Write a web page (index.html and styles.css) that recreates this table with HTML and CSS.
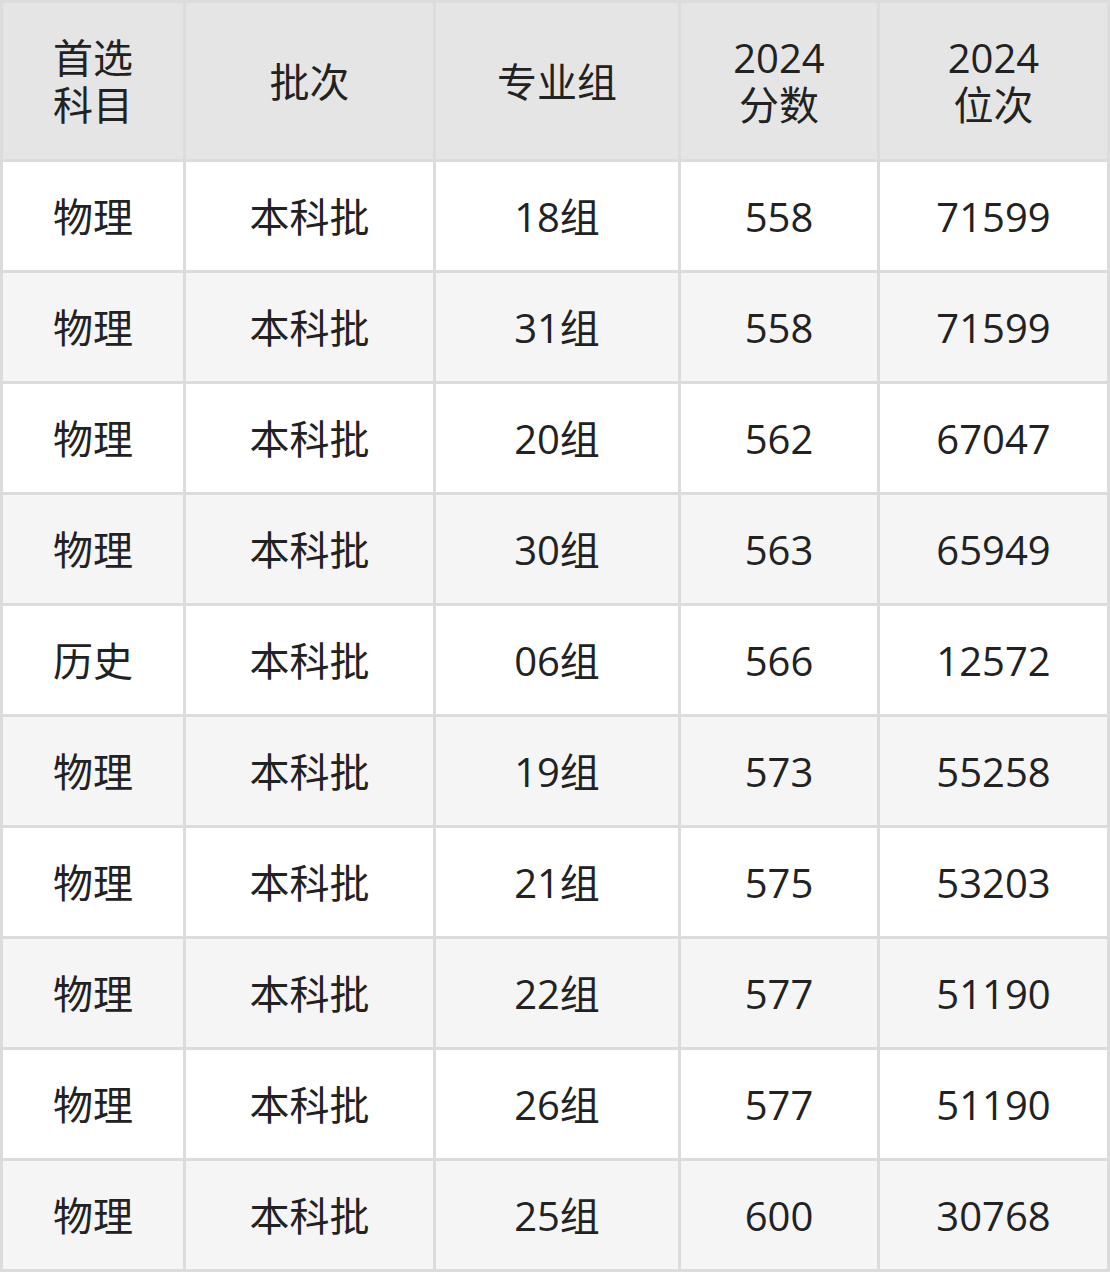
FILE: index.html
```html
<!DOCTYPE html>
<html lang="zh-CN">
<head>
<meta charset="utf-8">
<link rel="stylesheet" href="styles.css">
</head>
<body>
<div class="grid">
  <div class="cell head">首选<br>科目</div>
  <div class="cell head">批次</div>
  <div class="cell head">专业组</div>
  <div class="cell head">2024<br>分数</div>
  <div class="cell head">2024<br>位次</div>

  <div class="cell">物理</div><div class="cell">本科批</div><div class="cell">18组</div><div class="cell">558</div><div class="cell">71599</div>
  <div class="cell alt">物理</div><div class="cell alt">本科批</div><div class="cell alt">31组</div><div class="cell alt">558</div><div class="cell alt">71599</div>
  <div class="cell">物理</div><div class="cell">本科批</div><div class="cell">20组</div><div class="cell">562</div><div class="cell">67047</div>
  <div class="cell alt">物理</div><div class="cell alt">本科批</div><div class="cell alt">30组</div><div class="cell alt">563</div><div class="cell alt">65949</div>
  <div class="cell">历史</div><div class="cell">本科批</div><div class="cell">06组</div><div class="cell">566</div><div class="cell">12572</div>
  <div class="cell alt">物理</div><div class="cell alt">本科批</div><div class="cell alt">19组</div><div class="cell alt">573</div><div class="cell alt">55258</div>
  <div class="cell">物理</div><div class="cell">本科批</div><div class="cell">21组</div><div class="cell">575</div><div class="cell">53203</div>
  <div class="cell alt">物理</div><div class="cell alt">本科批</div><div class="cell alt">22组</div><div class="cell alt">577</div><div class="cell alt">51190</div>
  <div class="cell">物理</div><div class="cell">本科批</div><div class="cell">26组</div><div class="cell">577</div><div class="cell">51190</div>
  <div class="cell alt">物理</div><div class="cell alt">本科批</div><div class="cell alt">25组</div><div class="cell alt">600</div><div class="cell alt">30768</div>
</div>
</body>
</html>
```

FILE: styles.css
```css
html, body {
  margin: 0;
  padding: 0;
  background: #ffffff;
}

.grid {
  width: 1110px;
  box-sizing: border-box;
  display: grid;
  grid-template-columns: 180px 247px 242px 196px 227px;
  grid-template-rows: 156px repeat(10, 108px);
  gap: 3px;
  padding: 3px;
  background: #dcdcdc;
  font-family: "Open Sans", "Noto Sans CJK SC", sans-serif;
  font-size: 40px;
  color: #222222;
}

.cell {
  background: #ffffff;
  display: flex;
  align-items: center;
  justify-content: center;
  text-align: center;
  line-height: 47px;
}

.cell.alt {
  background: #f5f5f5;
}

.cell.head {
  background: #e5e5e5;
}
```
